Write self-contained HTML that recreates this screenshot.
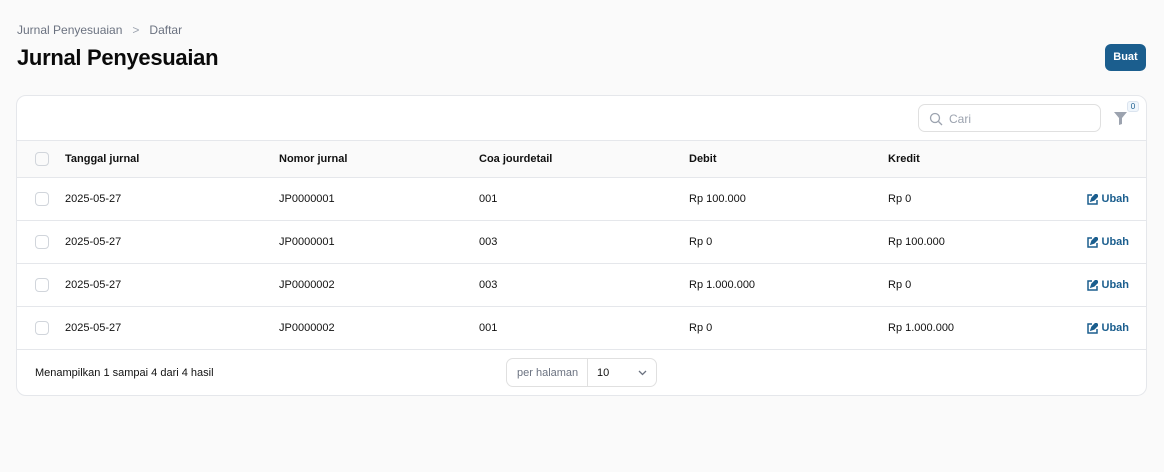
<!DOCTYPE html>
<html><head><meta charset="utf-8"><style>
*{box-sizing:border-box;margin:0;padding:0}
body{width:1164px;height:472px;background:#fafafa;font-family:"Liberation Sans",sans-serif;color:#111;position:relative;overflow:hidden}
.abs{position:absolute}
.bc{left:17px;top:23px;font-size:12px;color:#6b7280}
h1{position:absolute;left:17px;top:45px;font-size:22px;font-weight:700;letter-spacing:-0.3px;color:#0a0a0a}
.btn{left:1105px;top:44px;width:41px;height:27px;background:#1b5e8e;color:#fff;border-radius:6px;font-size:11px;font-weight:700;text-align:center;line-height:27px}
.card{left:16px;top:95px;width:1131px;height:301px;background:#fff;border:1px solid #e5e7eb;border-radius:10px;overflow:hidden}
.search{left:901px;top:8px;width:183px;height:28px;border:1px solid #e0e0e0;border-radius:7px}
.search span{position:absolute;left:30px;top:7px;font-size:12px;color:#9ca3af}
.hdr{left:0;top:44px;width:1130px;height:38px;background:#fafafa;border-top:1px solid #e5e7eb;border-bottom:1px solid #e5e7eb}
.row{left:0;width:1130px;height:43px;border-bottom:1px solid #e5e7eb;font-size:11px}
.row div,.hdr div{position:absolute;top:50%;transform:translateY(-50%)}
.hdr div{font-weight:700;font-size:11px}
.cb{left:18px;width:14px;height:14px;border:1px solid #d1d5db;border-radius:4px;transform:translateY(-50%)!important}
.ub{right:18px;color:#1b5e8e;font-weight:700;display:flex;align-items:center;gap:4px}
.foot{left:18px;top:271px;font-size:11px}
.pp{left:489px;top:262px;width:151px;height:29px;border:1px solid #e0e0e0;border-radius:7px;font-size:11px}
</style></head><body>
<div class="abs bc">Jurnal Penyesuaian &nbsp;&nbsp;<span style="color:#9ca3af">&gt;</span>&nbsp;&nbsp; Daftar</div>
<h1>Jurnal Penyesuaian</h1>
<div class="abs btn">Buat</div>
<div class="abs card">
 <div class="abs search"><svg class="abs" style="left:10px;top:7px" width="14" height="14" viewBox="0 0 14 14" fill="none" stroke="#9ca3af" stroke-width="1.3"><circle cx="6" cy="6" r="4.5"/><path d="M9.5 9.5L13 13"/></svg><span>Cari</span></div>
 <svg class="abs" style="left:1097px;top:15px" width="13" height="14" viewBox="0 0 13 14"><path d="M0 1h13L8 7v6l-3 1V7z" fill="#9ca3af"/></svg>
 <div class="abs" style="left:1110px;top:5px;width:12px;height:11px;border:1px solid #dbe4ef;background:#f0f6fc;border-radius:3px;font-size:8px;text-align:center;line-height:10px;color:#1b5e8e">0</div>
 <div class="abs hdr"><div class="cb"></div><div style="left:48px">Tanggal jurnal</div><div style="left:262px">Nomor jurnal</div><div style="left:462px">Coa jourdetail</div><div style="left:672px">Debit</div><div style="left:871px">Kredit</div></div>
 <div class="abs row" style="top:82px"><div class="cb"></div><div style="left:48px">2025-05-27</div><div style="left:262px">JP0000001</div><div style="left:462px">001</div><div style="left:672px">Rp 100.000</div><div style="left:871px">Rp 0</div><div class="ub"><svg width="11" height="11" viewBox="0 0 11 11" fill="none" stroke="#1b5e8e" stroke-width="1.5"><path d="M5 1H1v9h9V6"/><path d="M4 7l1-3 4-4 2 2-4 4z" fill="#1b5e8e"/></svg>Ubah</div></div>
 <div class="abs row" style="top:125px"><div class="cb"></div><div style="left:48px">2025-05-27</div><div style="left:262px">JP0000001</div><div style="left:462px">003</div><div style="left:672px">Rp 0</div><div style="left:871px">Rp 100.000</div><div class="ub"><svg width="11" height="11" viewBox="0 0 11 11" fill="none" stroke="#1b5e8e" stroke-width="1.5"><path d="M5 1H1v9h9V6"/><path d="M4 7l1-3 4-4 2 2-4 4z" fill="#1b5e8e"/></svg>Ubah</div></div>
 <div class="abs row" style="top:168px"><div class="cb"></div><div style="left:48px">2025-05-27</div><div style="left:262px">JP0000002</div><div style="left:462px">003</div><div style="left:672px">Rp 1.000.000</div><div style="left:871px">Rp 0</div><div class="ub"><svg width="11" height="11" viewBox="0 0 11 11" fill="none" stroke="#1b5e8e" stroke-width="1.5"><path d="M5 1H1v9h9V6"/><path d="M4 7l1-3 4-4 2 2-4 4z" fill="#1b5e8e"/></svg>Ubah</div></div>
 <div class="abs row" style="top:211px"><div class="cb"></div><div style="left:48px">2025-05-27</div><div style="left:262px">JP0000002</div><div style="left:462px">001</div><div style="left:672px">Rp 0</div><div style="left:871px">Rp 1.000.000</div><div class="ub"><svg width="11" height="11" viewBox="0 0 11 11" fill="none" stroke="#1b5e8e" stroke-width="1.5"><path d="M5 1H1v9h9V6"/><path d="M4 7l1-3 4-4 2 2-4 4z" fill="#1b5e8e"/></svg>Ubah</div></div>
 <div class="abs foot">Menampilkan 1 sampai 4 dari 4 hasil</div>
 <div class="abs pp"><span class="abs" style="left:10px;top:8px;color:#6b7280">per halaman</span><span class="abs" style="left:80px;top:0;width:1px;height:27px;background:#e0e0e0"></span><span class="abs" style="left:90px;top:8px">10</span><svg class="abs" style="left:131px;top:11px" width="9" height="6" viewBox="0 0 9 6" fill="none" stroke="#6b7280" stroke-width="1.3"><path d="M1 1l3.5 3.5L8 1"/></svg></div>
</div>
</body></html>
